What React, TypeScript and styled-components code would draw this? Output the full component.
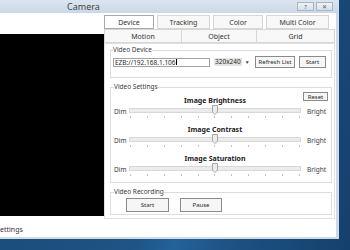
import React from 'react';
import styled, { createGlobalStyle } from 'styled-components';

const GlobalStyle = createGlobalStyle`
  html, body {
    margin: 0;
    padding: 0;
    overflow: hidden;
    background: #1a4f80;
  }
  * { box-sizing: border-box; }
`;

const Desktop = styled.div`
  width: 350px;
  height: 250px;
  display: flex;
  align-items: flex-start;
  background: linear-gradient(100deg, #1b4a78 0%, #1d5586 45%, #24629a 55%, #1c5284 70%, #15406d 100%);
  font-family: "Noto Sans", "Liberation Sans", sans-serif;
  color: #2a2a2a;
`;

const Window = styled.div`
  width: 339px;
  height: 239px;
  display: flex;
  flex-direction: column;
  background: #cfdbe8;
`;

const TitleBar = styled.div`
  height: 13px;
  display: flex;
  align-items: center;
  padding-left: 67px;
  background: linear-gradient(#dbe5f0, #cad8e6);
`;

const Title = styled.span`
  font-size: 9px;
  line-height: 13px;
  color: #444;
`;

const CaptionButtons = styled.div`
  margin-left: auto;
  margin-right: 6px;
  display: flex;
  gap: 2px;
`;

const CaptionButton = styled.div`
  width: 17px;
  height: 9px;
  border: 1px solid #a9b6c4;
  background: linear-gradient(#eef2f7, #d6dfe9);
  display: flex;
  align-items: center;
  justify-content: center;
  font-size: 6px;
  line-height: 1;
  color: #555;
`;

const Body = styled.div`
  flex: 1;
  display: flex;
  background: #fff;
  margin: 0 3px 2px 0;
`;

const LeftPane = styled.div`
  width: 107px;
  display: flex;
  flex-direction: column;
  padding-top: 21px;
  overflow: hidden;
`;

const VideoView = styled.div`
  width: 106px;
  height: 182px;
  background: #000;
`;

const StatusText = styled.div`
  margin-top: 10px;
  font-size: 7px;
  line-height: 8px;
  color: #333;
  white-space: nowrap;
`;

const TabControl = styled.div`
  flex: 1;
  display: flex;
  flex-direction: column;
  padding-top: 2px;
`;

const TabRow = styled.div`
  display: flex;
  gap: 4px;
  height: 14px;
`;

const TabGrid = styled.div`
  display: grid;
  grid-template-columns: 78px 75px 1fr;
  height: 14px;
  margin-right: 1px;
`;

const Tab = styled.div<{ $w?: number; $active?: boolean }>`
  width: ${p => (p.$w ? `${p.$w}px` : 'auto')};
  border: 1px solid ${p => (p.$active ? '#a9a9a9' : '#d6d6d6')};
  background: ${p => (p.$active ? '#fff' : '#f8f8f8')};
  display: flex;
  align-items: center;
  justify-content: center;
  font-size: 7px;
  color: #333;
  & + & { margin-left: ${p => (p.$w ? 0 : -1)}px; }
`;

const Page = styled.div`
  flex: 1;
  margin-right: 1px;
  border: 1px solid #e0e0e0;
  display: flex;
  flex-direction: column;
  gap: 5px;
  padding: 2px 2px 3px 5px;
  margin-bottom: 18px;
`;

const Group = styled.fieldset<{ $pl?: number; $pb?: number }>`
  margin: 0;
  min-width: 0;
  border: 1px solid #dddddd;
  padding: 0 5px ${p => p.$pb ?? 2}px ${p => p.$pl ?? 3}px;
`;

const Legend = styled.legend`
  padding: 0;
  font-size: 6.5px;
  line-height: 8px;
  color: #3a3a3a;
`;

const DeviceRow = styled.div`
  display: flex;
  align-items: center;
  height: 12px;
  margin-top: 2px;
`;

const TextInput = styled.div`
  width: 97px;
  height: 9px;
  border: 1px solid #a3a3a3;
  font-size: 6.5px;
  line-height: 7px;
  padding-left: 1px;
  display: flex;
  align-items: center;
  white-space: nowrap;
`;

const Caret = styled.span`
  display: inline-block;
  width: 1px;
  height: 6px;
  background: #000;
`;

const Combo = styled.div`
  margin-left: 4px;
  width: 38px;
  display: flex;
  align-items: center;
  gap: 3px;
  font-size: 6.5px;
`;

const ComboValue = styled.span`
  background: #e4e4e4;
  padding: 0 1px;
  line-height: 8px;
`;

const Arrow = styled.span`
  font-size: 5px;
  color: #444;
`;

const Button = styled.div<{ $w: number; $h?: number }>`
  width: ${p => p.$w}px;
  height: ${p => p.$h ?? 12}px;
  border: 1px solid #8a8a8a;
  background: #f6f6f6;
  display: flex;
  align-items: center;
  justify-content: center;
  font-size: 6px;
  color: #2a2a2a;
  white-space: nowrap;
`;

const DeviceButtons = styled.div`
  margin-left: 3px;
  display: flex;
  gap: 4px;
`;

const ResetRow = styled.div`
  display: flex;
  justify-content: flex-end;
  margin: 1px -2px -4px 0;
`;

const SliderBlock = styled.div`
  display: grid;
  grid-template-columns: 15px 1fr 25px;
  grid-template-rows: 8px 10px 3px;
  margin-bottom: 8px;
  &:last-of-type { margin-bottom: 4px; }
`;

const SliderTitle = styled.div`
  grid-column: 2;
  text-align: center;
  font-size: 7px;
  line-height: 8px;
  font-weight: 700;
  color: #222;
  white-space: nowrap;
`;

const EndLabel = styled.div<{ $right?: boolean }>`
  grid-row: 2;
  grid-column: ${p => (p.$right ? 3 : 1)};
  text-align: ${p => (p.$right ? 'right' : 'left')};
  font-size: 6.5px;
  line-height: 10px;
  padding-top: 2px;
  color: #3a3a3a;
`;

const Track = styled.div`
  grid-row: 2;
  grid-column: 2;
  position: relative;
  &::before {
    content: "";
    position: absolute;
    left: 0;
    right: 0;
    top: 3px;
    height: 3px;
    background: #ececec;
    border: 1px solid #d8d8d8;
  }
`;

const Thumb = styled.svg`
  position: absolute;
  top: 0;
  width: 6px;
  height: 10px;
  transform: translateX(-50%);
`;

const Ticks = styled.div`
  grid-row: 3;
  grid-column: 2;
  display: flex;
  justify-content: space-between;
  align-items: flex-end;
  padding: 0 1px;
`;

const Tick = styled.span`
  width: 1px;
  height: 2px;
  background: #c2c2c2;
`;

const RecordRow = styled.div`
  display: flex;
  gap: 11px;
  padding-left: 12px;
  margin-top: 2px;
`;

const Slider = ({ title, value }: { title: string; value: number }) => (
  <SliderBlock>
    <SliderTitle>{title}</SliderTitle>
    <EndLabel>Dim</EndLabel>
    <Track>
      <Thumb viewBox="0 0 6 10" style={{ left: `${value}%` }}>
        <path d="M0.5 0.5 H5.5 V7 L3 9.5 L0.5 7 Z" fill="#ececec" stroke="#a8a8a8" strokeWidth="1" />
      </Thumb>
    </Track>
    <EndLabel $right>Bright</EndLabel>
    <Ticks>
      {Array.from({ length: 11 }).map((_, i) => (
        <Tick key={i} />
      ))}
    </Ticks>
  </SliderBlock>
);

export default function App() {
  return (
    <>
      <GlobalStyle />
      <Desktop>
        <Window>
          <TitleBar>
            <Title>Camera</Title>
            <CaptionButtons>
              <CaptionButton>?</CaptionButton>
              <CaptionButton>✕</CaptionButton>
            </CaptionButtons>
          </TitleBar>
          <Body>
            <LeftPane>
              <VideoView />
              <StatusText>ettings</StatusText>
            </LeftPane>
            <TabControl>
              <TabRow>
                <Tab $w={50} $active>Device</Tab>
                <Tab $w={53}>Tracking</Tab>
                <Tab $w={50}>Color</Tab>
                <Tab $w={63}>Multi Color</Tab>
              </TabRow>
              <TabGrid>
                <Tab>Motion</Tab>
                <Tab>Object</Tab>
                <Tab>Grid</Tab>
              </TabGrid>
              <Page>
                <Group $pl={2} $pb={9}>
                  <Legend>Video Device</Legend>
                  <DeviceRow>
                    <TextInput>
                      EZB://192.168.1.106<Caret />
                    </TextInput>
                    <Combo>
                      <ComboValue>320x240</ComboValue>
                      <Arrow>▼</Arrow>
                    </Combo>
                    <DeviceButtons>
                      <Button $w={40}>Refresh List</Button>
                      <Button $w={27}>Start</Button>
                    </DeviceButtons>
                  </DeviceRow>
                </Group>
                <Group $pb={2}>
                  <Legend>Video Settings</Legend>
                  <ResetRow>
                    <Button $w={25} $h={9}>Reset</Button>
                  </ResetRow>
                  <Slider title="Image Brightness" value={50} />
                  <Slider title="Image Contrast" value={50} />
                  <Slider title="Image Saturation" value={50} />
                </Group>
                <Group $pb={2}>
                  <Legend>Video Recording</Legend>
                  <RecordRow>
                    <Button $w={43} $h={14}>Start</Button>
                    <Button $w={42} $h={14}>Pause</Button>
                  </RecordRow>
                </Group>
              </Page>
            </TabControl>
          </Body>
        </Window>
      </Desktop>
    </>
  );
}
